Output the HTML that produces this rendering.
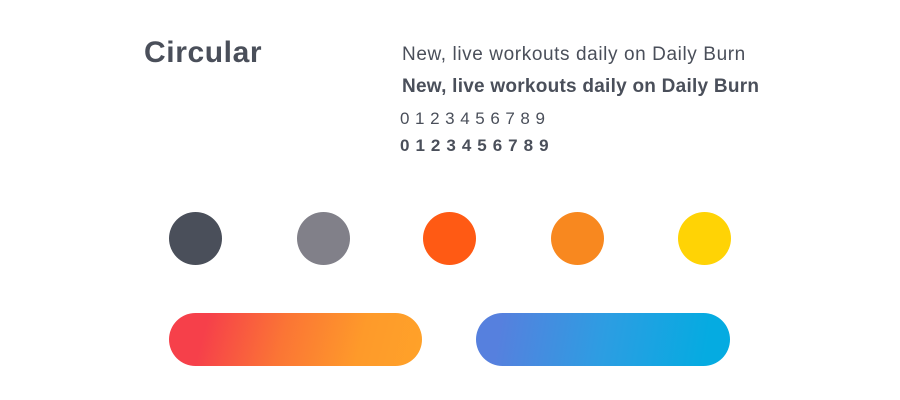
<!DOCTYPE html>
<html><head><style>
body{margin:0;width:900px;height:400px;background:#fff;font-family:"Liberation Sans",sans-serif;color:#4a4f5a;position:relative;overflow:hidden}
.a{position:absolute;white-space:nowrap}
.c{position:absolute;top:212px;width:53px;height:53px;border-radius:50%}
.p{position:absolute;top:313px;height:53px;border-radius:27px}
</style></head><body>
<div class="a" style="left:144px;top:36px;font-size:30px;font-weight:bold;letter-spacing:0.6px">Circular</div>
<div class="a" style="left:402px;top:44px;font-size:19px;letter-spacing:0.6px">New, live workouts daily on Daily Burn</div>
<div class="a" style="left:402px;top:76px;font-size:19px;font-weight:bold;letter-spacing:0.25px">New, live workouts daily on Daily Burn</div>
<div class="a" style="left:400px;top:109px;font-size:17px;letter-spacing:5.6px">0123456789</div>
<div class="a" style="left:400px;top:136px;font-size:17px;font-weight:bold;letter-spacing:6px">0123456789</div>
<div class="c" style="left:169px;background:#4a4f5a"></div>
<div class="c" style="left:297px;background:#818089"></div>
<div class="c" style="left:423px;background:#ff5a14"></div>
<div class="c" style="left:551px;background:#f8881f"></div>
<div class="c" style="left:678px;background:#ffd305"></div>
<div class="p" style="left:169px;width:253px;background:linear-gradient(105deg,#f6404a 15%,#fb7535 45%,#fe9a2a 75%,#ffa229)"></div>
<div class="p" style="left:476px;width:254px;background:linear-gradient(100deg,#5680de 10%,#2d9de2 50%,#05abe1 90%)"></div>
</body></html>
